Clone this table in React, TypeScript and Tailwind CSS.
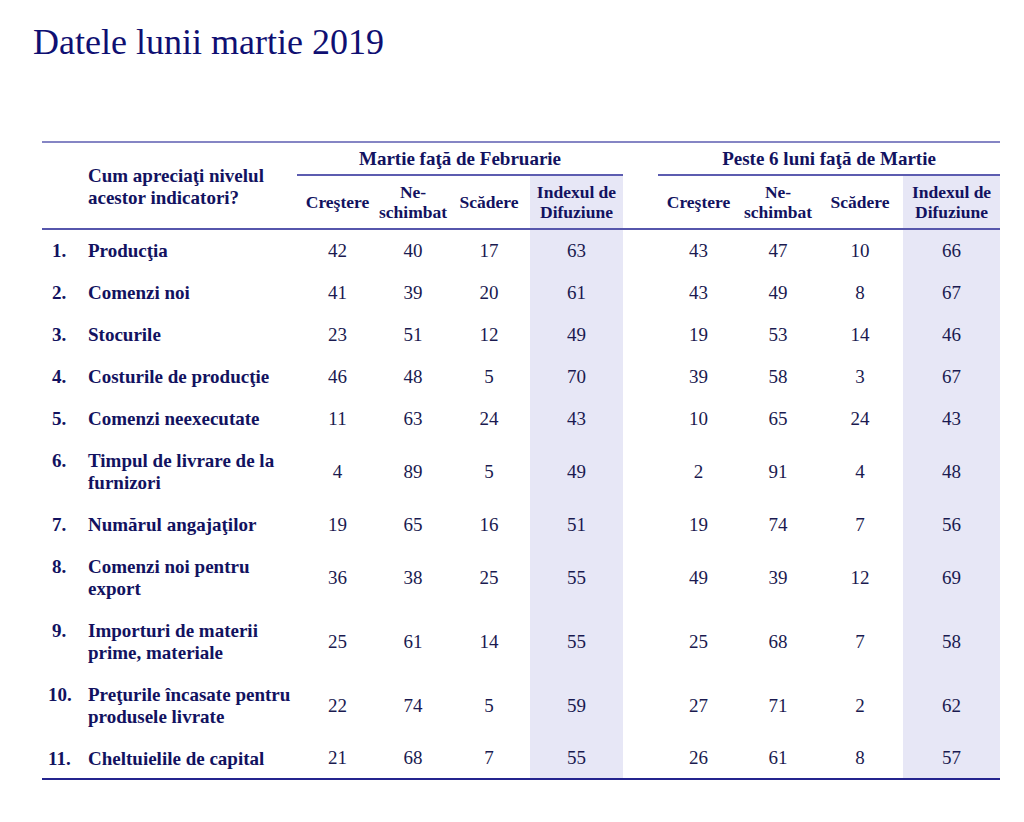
const rows: [string, string, number[]][] = [
  ["1.", "Producţia", [42, 40, 17, 63, 43, 47, 10, 66]],
  ["2.", "Comenzi noi", [41, 39, 20, 61, 43, 49, 8, 67]],
  ["3.", "Stocurile", [23, 51, 12, 49, 19, 53, 14, 46]],
  ["4.", "Costurile de producţie", [46, 48, 5, 70, 39, 58, 3, 67]],
  ["5.", "Comenzi neexecutate", [11, 63, 24, 43, 10, 65, 24, 43]],
  ["6.", "Timpul de livrare de la furnizori", [4, 89, 5, 49, 2, 91, 4, 48]],
  ["7.", "Numărul angajaţilor", [19, 65, 16, 51, 19, 74, 7, 56]],
  ["8.", "Comenzi noi pentru export", [36, 38, 25, 55, 49, 39, 12, 69]],
  ["9.", "Importuri de materii prime, materiale", [25, 61, 14, 55, 25, 68, 7, 58]],
  ["10.", "Preţurile încasate pentru produsele livrate", [22, 74, 5, 59, 27, 71, 2, 62]],
  ["11.", "Cheltuielile de capital", [21, 68, 7, 55, 26, 61, 8, 57]],
];

function SubHeads() {
  return (
    <>
      <th className="align-middle">Creştere</th>
      <th className="align-middle">
        Ne-
        <br />
        schimbat
      </th>
      <th className="align-middle">Scădere</th>
      <th className="align-middle bg-[#e7e7f6]">
        Indexul de
        <br />
        Difuziune
      </th>
    </>
  );
}

export default function App() {
  return (
    <div
      className="w-[1024px] h-[822px] bg-white pt-[24px]"
      style={{ fontFamily: '"Liberation Serif", "Times New Roman", serif' }}
    >
      <h1 className="pl-[33px] text-[36px] leading-none text-[#0f0f72] font-normal">
        Datele lunii martie 2019
      </h1>

      <table className="ml-[42px] mt-[81px] w-[958px] table-fixed border-collapse text-[#121260]">
        <colgroup>
          <col className="w-[34px]" />
          <col className="w-[221px]" />
          <col className="w-[81px]" />
          <col className="w-[70px]" />
          <col className="w-[82px]" />
          <col className="w-[93px]" />
          <col className="w-[35px]" />
          <col className="w-[81px]" />
          <col className="w-[78px]" />
          <col className="w-[86px]" />
          <col className="w-[97px]" />
        </colgroup>
        <thead className="font-bold">
          <tr className="h-[33px] border-t-2 border-[#8585c4] text-[19px] leading-[22px]">
            <th rowSpan={2} className="border-b-2 border-[#5656ac]"></th>
            <th
              rowSpan={2}
              className="border-b-2 border-[#5656ac] pl-[12px] text-left align-middle leading-[22px] pt-[2px]"
            >
              Cum apreciaţi nivelul
              <br />
              acestor indicatori?
            </th>
            <th colSpan={4} className="border-b-2 border-[#5c5cb0] align-middle">
              Martie faţă de Februarie
            </th>
            <th></th>
            <th colSpan={4} className="border-b-2 border-[#5c5cb0] align-middle">
              Peste 6 luni faţă de Martie
            </th>
          </tr>
          <tr className="h-[54px] border-b-2 border-[#5656ac] text-[17.5px] leading-[20px]">
            <SubHeads />
            <th></th>
            <SubHeads />
          </tr>
        </thead>
        <tbody>
          {rows.map(([num, label, vals], i) => {
            const last = i === rows.length - 1;
            return (
              <tr
                key={num}
                className={
                  last
                    ? "border-b-2 border-[#24248e] text-[19px] leading-[22px]"
                    : "text-[19px] leading-[22px]"
                }
              >
                <td
                  className={
                    (num.length > 2 ? "pl-[6px] " : "pl-[10px] ") +
                    (last ? "pt-[10px] pb-[8px] " : "py-[10px] ") +
                    "align-top font-bold"
                  }
                >
                  {num}
                </td>
                <td
                  className={
                    (last ? "pt-[10px] pb-[8px] " : "py-[10px] ") +
                    "align-top pl-[12px] font-bold"
                  }
                >
                  {label}
                </td>
                {vals.slice(0, 4).map((v, j) => (
                  <td
                    key={j}
                    className={
                      j === 3
                        ? "text-center align-middle bg-[#e7e7f6] text-[#1a1a50]"
                        : "text-center align-middle text-[#1a1a50]"
                    }
                  >
                    {v}
                  </td>
                ))}
                <td></td>
                {vals.slice(4).map((v, j) => (
                  <td
                    key={j}
                    className={
                      j === 3
                        ? "text-center align-middle bg-[#e7e7f6] text-[#1a1a50]"
                        : "text-center align-middle text-[#1a1a50]"
                    }
                  >
                    {v}
                  </td>
                ))}
              </tr>
            );
          })}
        </tbody>
      </table>
    </div>
  );
}
